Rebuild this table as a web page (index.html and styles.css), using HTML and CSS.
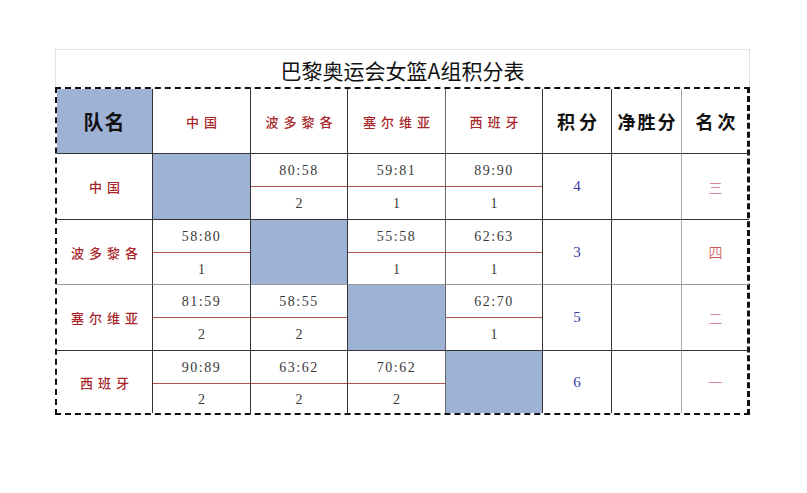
FILE: index.html
```html
<!DOCTYPE html>
<html lang="zh">
<head>
<meta charset="utf-8">
<link rel="stylesheet" href="styles.css">
</head>
<body>
<div class="sheet">
  <div class="title">巴黎奥运会女篮A组积分表</div>
  <div class="grid">
    <div class="cell blue head-main">队名</div>
    <div class="cell team">中国</div>
    <div class="cell team">波多黎各</div>
    <div class="cell team c-gray">塞尔维亚</div>
    <div class="cell team">西班牙</div>
    <div class="cell head">积分</div>
    <div class="cell head c-light">净胜分</div>
    <div class="cell head last">名次</div>

    <div class="cell team">中国</div>
    <div class="cell blue"></div>
    <div class="cell match"><div class="score">80:58</div><div class="pt">2</div></div>
    <div class="cell match c-gray"><div class="score">59:81</div><div class="pt">1</div></div>
    <div class="cell match"><div class="score">89:90</div><div class="pt">1</div></div>
    <div class="cell num">4</div>
    <div class="cell c-light"></div>
    <div class="cell rank pale last">三</div>

    <div class="cell team r-gray">波多黎各</div>
    <div class="cell match r-gray"><div class="score">58:80</div><div class="pt">1</div></div>
    <div class="cell blue r-gray"></div>
    <div class="cell match c-gray r-gray"><div class="score">55:58</div><div class="pt">1</div></div>
    <div class="cell match r-gray"><div class="score">62:63</div><div class="pt">1</div></div>
    <div class="cell num r-gray">3</div>
    <div class="cell c-light r-gray"></div>
    <div class="cell rank last r-gray">四</div>

    <div class="cell team">塞尔维亚</div>
    <div class="cell match"><div class="score">81:59</div><div class="pt">2</div></div>
    <div class="cell match"><div class="score">58:55</div><div class="pt">2</div></div>
    <div class="cell blue c-gray"></div>
    <div class="cell match"><div class="score">62:70</div><div class="pt">1</div></div>
    <div class="cell num">5</div>
    <div class="cell c-light"></div>
    <div class="cell rank pale last">二</div>

    <div class="cell team bottom">西班牙</div>
    <div class="cell match bottom"><div class="score">90:89</div><div class="pt">2</div></div>
    <div class="cell match bottom"><div class="score">63:62</div><div class="pt">2</div></div>
    <div class="cell match bottom c-gray"><div class="score">70:62</div><div class="pt">2</div></div>
    <div class="cell blue bottom"></div>
    <div class="cell num bottom">6</div>
    <div class="cell c-light bottom"></div>
    <div class="cell rank pale last bottom">一</div>
  </div>
</div>
</body>
</html>
```

FILE: styles.css
```css
html, body {
  margin: 0;
  padding: 0;
  background: #ffffff;
}
body {
  font-family: "Noto Sans CJK SC", "Liberation Sans", sans-serif;
}
.sheet {
  width: 695px;
  margin: 49px 0 0 55px;
}
.title {
  border: 1px solid #e2e2e2;
  border-bottom: none;
  display: flex;
  align-items: center;
  justify-content: center;
  font-size: 21px;
  color: #111;
  padding-top: 2px;
  box-sizing: border-box;
  height: 38px;
}
.grid {
  display: grid;
  grid-template-columns: 96px 98px 97px 98px 97px 69px 70px 67px;
  grid-template-rows: 65px 66px 65px 66px 62px;
  border-top: 2px dashed #111;
  border-left: 2px dashed #111;
  border-bottom: 2px dashed #111;
  border-right: 3px dashed #111;
}
.cell {
  border-right: 1px solid #333;
  border-bottom: 1px solid #333;
  display: flex;
  align-items: center;
  justify-content: center;
  min-width: 0;
}
.cell.last { border-right: none; }
.cell.bottom { border-bottom: none; }
.cell.c-gray { border-right-color: #666; }
.cell.c-light { border-right-color: #aaa; }
.cell.r-gray { border-bottom-color: #999; }
.blue {
  background: #9db2d5;
}
.head-main {
  font-size: 20px;
  font-weight: 700;
  color: #111;
  letter-spacing: 1px;
}
.team {
  color: #a8262a;
  font-size: 13px;
  font-weight: 500;
  letter-spacing: 5px;
  padding-left: 5px;
}
.head {
  font-size: 18px;
  font-weight: 700;
  color: #111;
  letter-spacing: 4px;
  padding-left: 4px;
}
.head.c-light {
  letter-spacing: 2px;
  padding-left: 2px;
}
.match {
  flex-direction: column;
  align-items: stretch;
  justify-content: stretch;
  font-family: "Liberation Serif", "DejaVu Serif", serif;
  color: #3a3a3a;
  font-size: 14px;
}
.match .score {
  flex: 0 0 33px;
  border-bottom: 1px solid #b55050;
  display: flex;
  align-items: center;
  justify-content: center;
  padding-top: 2px;
  box-sizing: border-box;
  letter-spacing: 1.5px;
}
.match .pt {
  flex: 1;
  display: flex;
  align-items: center;
  justify-content: center;
  padding-top: 2px;
}
.num {
  font-family: "Liberation Serif", "DejaVu Serif", serif;
  font-size: 15px;
  color: #3a3ea0;
}
.rank {
  font-family: "Noto Sans CJK SC", sans-serif;
  font-size: 14px;
  color: #c0302e;
  font-weight: 300;
}
.rank.pale {
  color: #d26a7a;
}
```
